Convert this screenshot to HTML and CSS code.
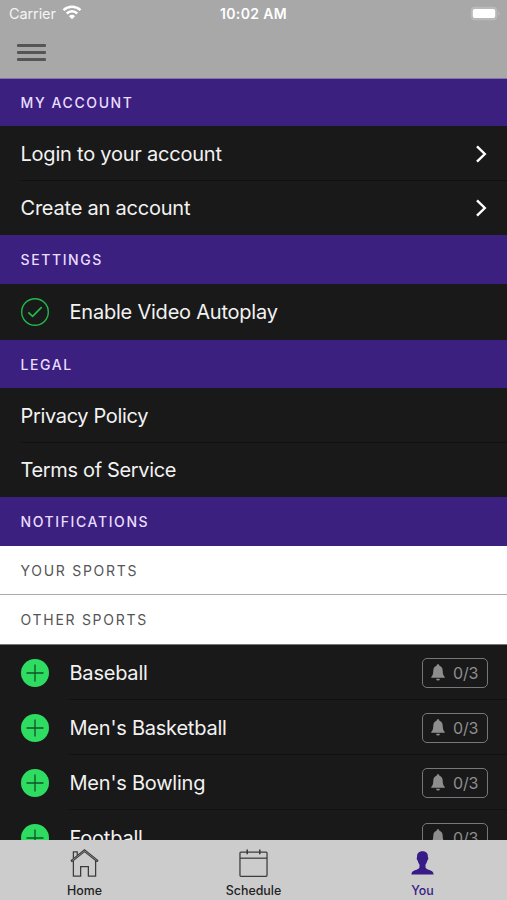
FILE: index.html
```html
<!DOCTYPE html>
<html lang="en">
<head>
<meta charset="utf-8">
<title>Account</title>
<link rel="stylesheet" href="styles.css">
</head>
<body>
<svg class="defs" width="0" height="0">
  <symbol id="plus" viewBox="0 0 28 28"><circle cx="14" cy="14" r="14" fill="#2fdc62"/><path d="M14 5.5v17M5.5 14h17" stroke="#125228" stroke-width="1.300"/></symbol>
  <symbol id="chevron" viewBox="0 0 12 18"><path d="M2 1.300 9.800 9 2 16.700" fill="none" stroke="#fff" stroke-width="2.400"/></symbol>
  <symbol id="bell" viewBox="0 0 14 17"><path d="M7 .3C8 .3 8.400 1 8.400 1.700c2.300.7 3.200 2.500 3.300 5 .1 3.500.8 5.300 2.100 6.200v.9H.2v-.9c1.300-.9 2-2.700 2.100-6.200.1-2.500 1-4.300 3.300-5C5.600 1 6 .3 7 .3ZM5.100 14.700h3.800a1.900 1.900 0 0 1-3.800 0Z" fill="#8e8e8e"/></symbol>
</svg>
<div class="app">
  <header class="top">
    <div class="status">
      <div class="carrier"><span>Carrier</span>
        <svg width="20" height="15" viewBox="0 0 20 15" fill="none" stroke="#fff" stroke-width="2.500"><path d="M1.500 5.200a12.300 12.300 0 0 1 17 0M4.700 8.500a7.600 7.600 0 0 1 10.600 0"/><path d="M10 14.300 6.900 11.200a4.500 4.500 0 0 1 6.200 0Z" fill="#fff" stroke="none"/></svg>
      </div>
      <div class="time">10:02 AM</div>
      <div class="power"><svg width="31" height="15" viewBox="0 0 31 15"><rect x=".7" y=".7" width="26.600" height="13.600" rx="4" fill="#b9b9b9"/><rect x="2.800" y="3" width="22.400" height="9" rx="2" fill="#fff"/><path d="M28.500 5.300q2 2.200 0 4.400Z" fill="#c4c4c4"/></svg></div>
    </div>
    <div class="menu"><i></i><i></i><i></i></div>
  </header>
  <main>
    <h2 class="head first"><span>MY ACCOUNT</span></h2>
    <div class="row"><span>Login to your account</span><svg class="chev"><use href="#chevron"/></svg></div>
    <div class="row last"><span>Create an account</span><svg class="chev"><use href="#chevron"/></svg></div>
    <h2 class="head"><span>SETTINGS</span></h2>
    <div class="row item last setting"><svg class="mark" viewBox="0 0 28 28" fill="none" stroke="#20b94c"><circle cx="14" cy="14" r="13.300" stroke-width="1.400"/><path d="m7.300 14.300 4.300 4L20.700 9.200" stroke-width="1.800"/></svg><span>Enable Video Autoplay</span></div>
    <h2 class="head"><span>LEGAL</span></h2>
    <div class="row legal"><span>Privacy Policy</span></div>
    <div class="row last legal"><span>Terms of Service</span></div>
    <h2 class="head"><span>NOTIFICATIONS</span></h2>
    <h3 class="sub"><span>YOUR SPORTS</span></h3>
    <h3 class="sub end"><span>OTHER SPORTS</span></h3>
    <div class="row item sport"><svg class="mark"><use href="#plus"/></svg><span>Baseball</span><div class="pill"><svg><use href="#bell"/></svg><b>0/3</b></div></div>
    <div class="row item sport"><svg class="mark"><use href="#plus"/></svg><span>Men's Basketball</span><div class="pill"><svg><use href="#bell"/></svg><b>0/3</b></div></div>
    <div class="row item sport"><svg class="mark"><use href="#plus"/></svg><span>Men's Bowling</span><div class="pill"><svg><use href="#bell"/></svg><b>0/3</b></div></div>
    <div class="row item sport"><svg class="mark"><use href="#plus"/></svg><span>Football</span><div class="pill"><svg><use href="#bell"/></svg><b>0/3</b></div></div>
  </main>
  <nav class="tabs">
    <div class="tab"><svg viewBox="0 0 30 30" fill="none" stroke="#3c3c3c" stroke-width="1.300"><path d="M1.800 13.200 15 2.700l13.200 10.500M1.800 13.200 1.200 11.700 15 .8l13.800 10.900-.6 1.500" stroke-width="1.100"/><path d="M3.500 9.500V3h4v3.300M3.500 12v16H11V18.200h8V28h7.500V12"/></svg><span>Home</span></div>
    <div class="tab"><svg viewBox="0 0 30 30" fill="none" stroke="#3c3c3c" stroke-width="1.300"><rect x="1" y="3.200" width="28" height="25" rx="1"/><path d="M1 9.500h28"/><path d="M8.500.5v5M21.500.5v5" stroke-width="1.600"/></svg><span>Schedule</span></div>
    <div class="tab active"><svg viewBox="0 0 30 30" fill="#371b86"><path d="M15 2.300c4.100 0 6 2.500 5.600 6.300.8.300.5 2.500-.7 3.600-.4 2-1 3-1.800 4v2.600c.2 1.800 2.400 2.300 4.700 3.100 2.500.8 3.500 2 3.700 4.400h-23c.2-2.400 1.200-3.600 3.700-4.400 2.300-.8 4.500-1.300 4.700-3.100v-2.600c-.8-1-1.400-2-1.800-4-1.200-1.100-1.500-3.300-.7-3.600C9 4.800 10.900 2.300 15 2.300Z"/></svg><span>You</span></div>
  </nav>
</div>
</body>
</html>
```
FILE: styles.css
```css
* { box-sizing: border-box; }
body { margin: 0; background: #191919; font-family: Inter, "Liberation Sans", sans-serif; }
.defs { display: block; height: 0; }
.app { width: 507px; height: 900px; display: flex; flex-direction: column; overflow: hidden; }
.top { flex: none; height: 79px; background: #a8a8a8; border-bottom: 1px solid #8274ac; }
.status { display: grid; grid-template-columns: 1fr 1fr 1fr; height: 27px; align-items: center; padding: 0 6px; color: #fff; font-size: 14px; }
.carrier { display: flex; align-items: center; gap: 6px; padding-left: 3px; color: #f4f4f4; font-size: 14.5px; letter-spacing: -.1px; }
.carrier svg { margin-top: -2px; }
.time { text-align: center; font-weight: 600; letter-spacing: .35px; }
.power { display: flex; justify-content: flex-end; }
.menu { display: flex; flex-direction: column; gap: 4.3px; margin: 16.5px 0 0 17px; width: 28.5px; }
.menu i { height: 3px; background: #555; border-radius: 1px; }
main { flex: 1; min-height: 0; overflow: hidden; }
h2, h3 { margin: 0; padding: 0 0 0 20.5px; display: flex; align-items: center; font-size: 14px; font-weight: 500; letter-spacing: 1.6px; }
.head { height: 48.6px; background: #3b2080; color: #e9ddff; }
.first { height: 47.4px; }
.row { height: 54.4px; margin-left: 20.5px; padding: 1px 20px 0 0; display: flex; align-items: center; border-bottom: 1px solid #111; color: #f2f2f2; font-size: 20px; letter-spacing: -.22px; }
.legal { letter-spacing: -.34px; padding-top: 2px; }
.last { border-bottom-color: transparent; }
.chev { width: 12px; height: 18px; margin-left: auto; }
.item { border: 0; gap: 21px; padding: 0 19px 0 0; }
.setting { height: 56px; }
.mark { width: 28px; height: 28px; flex: none; }
.sub { height: 49.5px; background: #fff; color: #555; font-weight: 400; letter-spacing: 1.72px; border-bottom: 1px solid #aaa; padding-top: 1px; }
.end { border-bottom-color: #777; }
.sport { height: 55px; padding-top: 1px; background: linear-gradient(#111, #111) 48px 100% / 100% 1px no-repeat; }
.pill { width: 66px; height: 30px; margin-left: auto; display: flex; align-items: center; gap: 8px; padding-left: 8px; border: 1.5px solid #777; border-radius: 5px; }
.pill svg { width: 14px; height: 17px; margin-top: -1px; }
.pill b { font-size: 16px; font-weight: 400; color: #8e8e8e; letter-spacing: -.2px; }
.tabs { flex: none; height: 60px; background: #ccc; display: grid; grid-template-columns: repeat(3, 1fr); }
.tab { display: flex; flex-direction: column; align-items: center; padding-top: 9px; font-size: 12.4px; line-height: 16px; font-weight: 500; color: #222; gap: 5px; }
.tab svg { width: 29px; height: 29px; }
.active { color: #371b86; }
```
